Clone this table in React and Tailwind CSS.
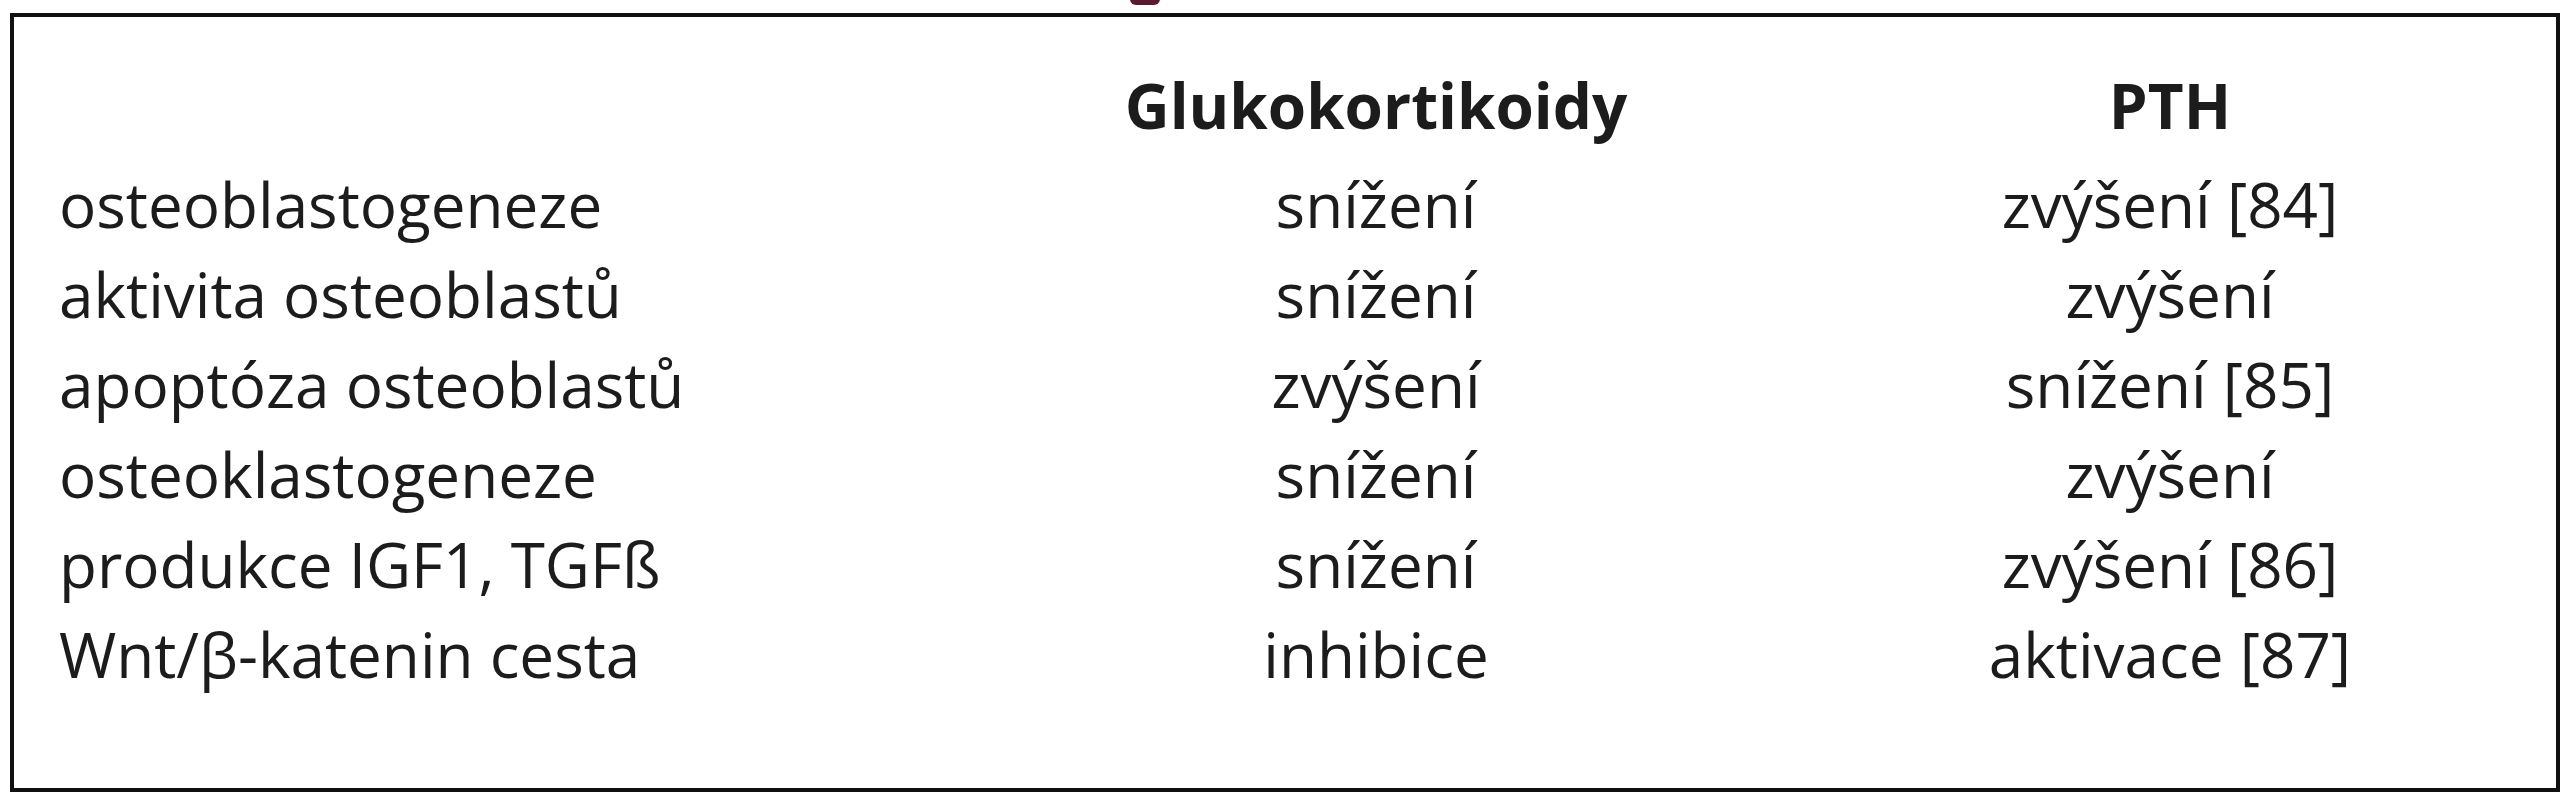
import React from "react";

const rows = [
  ["osteoblastogeneze", "snížení", "zvýšení [84]"],
  ["aktivita osteoblastů", "snížení", "zvýšení"],
  ["apoptóza osteoblastů", "zvýšení", "snížení [85]"],
  ["osteoklastogeneze", "snížení", "zvýšení"],
  ["produkce IGF1, TGFß", "snížení", "zvýšení [86]"],
  ["Wnt/β-katenin cesta", "inhibice", "aktivace [87]"],
];

export default function App() {
  return (
    <div
      className="w-[2570px] h-[800px] bg-white text-[#1c1c1c] overflow-hidden"
      style={{ fontFamily: '"Open Sans", "Noto Sans", sans-serif' }}
    >
      <div className="h-[13px] overflow-hidden">
        <div className="ml-[1130px] -mt-[7px] w-[30px] h-[12px] rounded-full bg-[#5c1a30]" />
      </div>
      <div className="ml-[10px] w-[2550px] h-[779px] border-[4px] border-[#111] pt-[43px] pl-[45px]">
        <div className="grid grid-cols-[817px_600px_588px] gap-x-[200px] text-[62px] leading-[90px]">
          <div className="h-[99px]" />
          <div className="h-[99px] text-center font-bold">Glukokortikoidy</div>
          <div className="h-[99px] text-center font-bold">PTH</div>
          {rows.map((r, i) => (
            <React.Fragment key={i}>
              <div className="whitespace-nowrap">{r[0]}</div>
              <div className="text-center whitespace-nowrap">{r[1]}</div>
              <div className="text-center whitespace-nowrap">{r[2]}</div>
            </React.Fragment>
          ))}
        </div>
      </div>
    </div>
  );
}
